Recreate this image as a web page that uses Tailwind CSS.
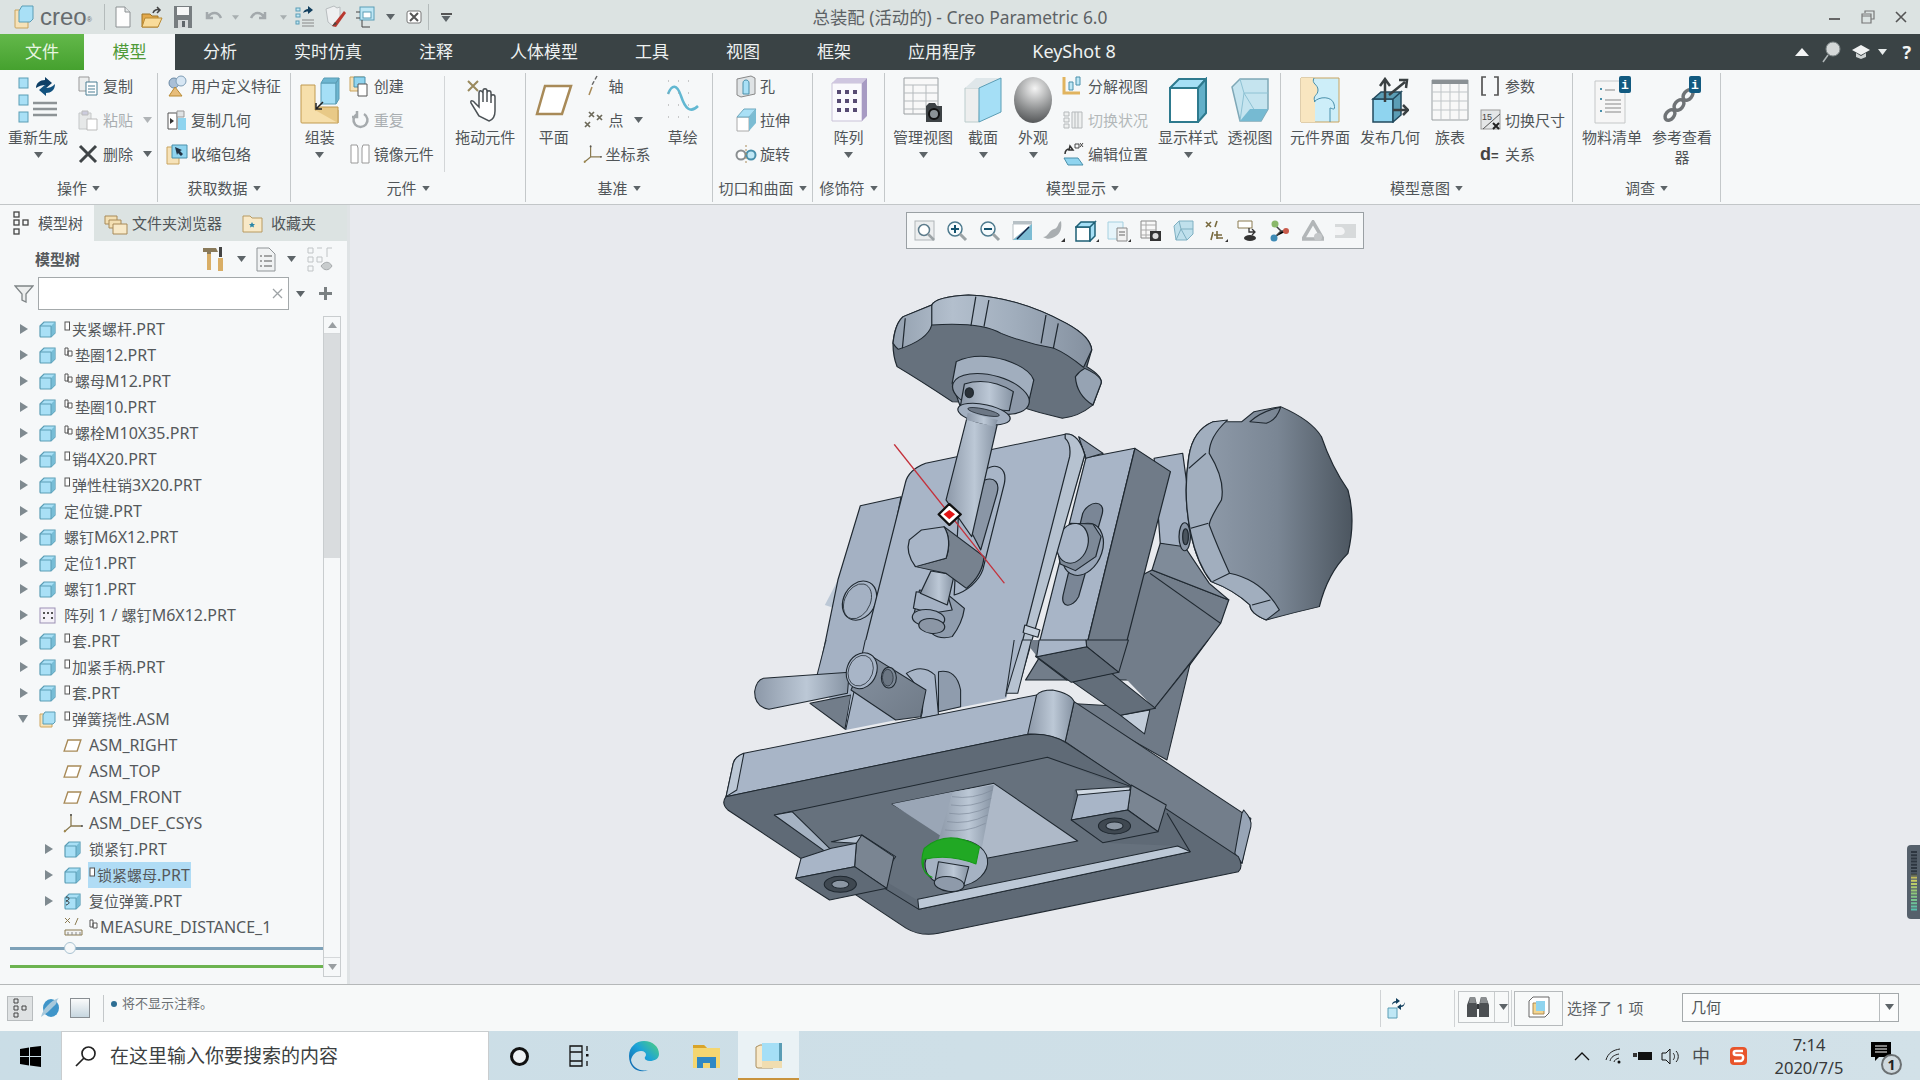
<!DOCTYPE html>
<html lang="zh-CN"><head><meta charset="utf-8"><title>Creo Parametric</title>
<script src="https://cdn.jsdelivr.net/npm/@tailwindcss/browser@4"></script></head>
<body class="w-[1920px] h-[1080px] overflow-hidden flex flex-col bg-[#e8eaee] text-[#505558] font-['Noto_Sans','Noto_Sans_CJK_SC',sans-serif]">
<svg class="hidden"><defs>
<symbol id="cube" viewBox="0 0 17 17"><path d="M1 5 5 1h11v11l-4 4H2a1 1 0 0 1-1-1z" fill="#a9e0f6" stroke="#5b9db5" stroke-width="1.2"/><path d="M12 16V5l4-4v11z" fill="#78bdd6"/><path d="M1 5h11V16" fill="none" stroke="#5b9db5"/></symbol>
<symbol id="asm" viewBox="0 0 17 17"><path d="M1 3h12v13H2a1 1 0 0 1-1-1z" fill="#f6e2b8" stroke="#cfa65e"/><path d="M4 4 6 1h10v10l-2 2H4z" fill="#a9e0f6" stroke="#5b9db5"/></symbol>
<symbol id="tri" viewBox="0 0 8 10"><path d="M0 0 8 5 0 10z" fill="#7f8a90"/></symbol>
<symbol id="dn" viewBox="0 0 9 6"><path d="M0 0h9L4.500 6z" fill="#5d6468"/></symbol>
<symbol id="mk1" viewBox="0 0 8 11"><rect x="1" y="1" width="4.500" height="8" fill="#fff" stroke="#555"/></symbol>
<symbol id="mk2" viewBox="0 0 11 11"><path d="M1 1h3v7H1z M4 4h4v5H4z" fill="#fff" stroke="#555"/></symbol>
<symbol id="plane" viewBox="0 0 20 14"><path d="M5 1h14l-4 12H1z" fill="#fff" stroke="#a88a58" stroke-width="1.500"/></symbol>
<symbol id="csys" viewBox="0 0 20 20"><path d="M8 1v12L1 19M8 13h11" fill="none" stroke="#8a7a50" stroke-width="1.300"/><circle cx="8" cy="2" r="1" fill="#555"/><circle cx="19" cy="13" r="1" fill="#555"/><circle cx="2" cy="18" r="1.200" fill="#a08a50"/></symbol>
</defs></svg>

<!-- title bar -->
<header class="h-[34px] shrink-0 bg-[#dce3e2] grid grid-cols-[1fr_auto_1fr] items-center">
 <div class="flex items-center h-full">
  <div class="flex items-center pl-[14px] w-[104px] h-full">
   <svg class="w-[20px] h-[24px]" viewBox="0 0 20 24"><path d="M1 5h13v18H2a1 1 0 0 1-1-1z" fill="#f6e2b8" stroke="#c9a45e"/><path d="M5 6 8 1h11v13l-3 3H5z" fill="#a9e0f6" stroke="#5b9db5"/></svg>
   <span class="ml-[6px] text-[24px] font-['Liberation_Sans',sans-serif] text-[#666b6e] leading-none whitespace-nowrap">creo<sup class="text-[7px]">®</sup></span>
  </div>
  <div class="w-px h-[26px] bg-[#b4bbbb] mr-[4px]"></div>
  <div class="flex items-center h-full">
   <div class="w-[28px] flex justify-center"><svg class="w-[18px] h-[22px]" viewBox="0 0 18 22"><path d="M2 1h9l5 5v15H2z" fill="#fdfdfd" stroke="#8b9092"/><path d="M11 1v5h5" fill="#e3e6e7" stroke="#8b9092"/></svg></div>
   <div class="w-[30px] flex justify-center"><svg class="w-[22px] h-[22px]" viewBox="0 0 22 22"><path d="M1 8h8l2 2h6v11H1z" fill="#e3a94b" stroke="#a07426"/><path d="M4 12h17l-4 9H1z" fill="#f9dc9b" stroke="#b98a33"/><path d="M12 7c1-3 4-4 6-3M16 1l3 3-3 3" fill="none" stroke="#444" stroke-width="1.500"/></svg></div>
   <div class="w-[32px] flex justify-center"><svg class="w-[20px] h-[24px]" viewBox="0 0 20 24"><path d="M1 1h18v22H1z" fill="#777d80"/><path d="M4 2h12v8H4z" fill="#f6f7f7"/><path d="M5 15h10v8H5z" fill="#d6d9da"/><path d="M9 16h3v6H9z" fill="#60666a"/></svg></div>
   <div class="w-[28px] flex justify-center"><svg class="w-[19px] h-[15px]" viewBox="0 0 19 15"><path d="M3 2v6h6M4 7c3-5 10-6 13 1" fill="none" stroke="#a3a9ac" stroke-width="2.500"/></svg></div>
   <div class="w-[16px] flex justify-center"><svg class="w-[7px] h-[5px]"><use href="#dn" opacity=".4"/></svg></div>
   <div class="w-[30px] flex justify-center"><svg class="w-[19px] h-[15px]" viewBox="0 0 19 15"><path d="M16 2v6h-6M15 7c-3-5-10-6-13 1" fill="none" stroke="#a3a9ac" stroke-width="2.500"/></svg></div>
   <div class="w-[20px] flex justify-center"><svg class="w-[7px] h-[5px]"><use href="#dn" opacity=".4"/></svg></div>
   <div class="w-[24px] flex justify-center"><svg class="w-[20px] h-[24px]" viewBox="0 0 20 24"><rect x="1" y="3" width="4" height="3" fill="#bfe7f5" stroke="#5b9db5"/><rect x="1" y="9" width="4" height="3" fill="#bfe7f5" stroke="#5b9db5"/><rect x="1" y="16" width="3" height="3" fill="#bfe7f5" stroke="#5b9db5"/><path d="M7 15h12M7 18h12M7 21h12" stroke="#888"/><path d="M8 8c1-3 3-4 5-4V1l5 4-5 4V6.500c-2 0-3 .5-5 1.500z" fill="#123f5e"/></svg></div>
   <div class="w-[38px] flex justify-center"><svg class="w-[24px] h-[24px]" viewBox="0 0 24 24"><path d="M2 4l8-3 3 2 3-1v11l-6 9-6-5z" fill="#eef0f1" stroke="#b8bdbf"/><path d="M8 21l12-15 2 2-10 14z" fill="#b8382f"/><path d="M8 21l3-4 2 2z" fill="#49433f"/></svg></div>
   <div class="w-[24px] flex justify-center"><svg class="w-[22px] h-[22px]" viewBox="0 0 22 22"><rect x="4" y="1" width="14" height="13" fill="#bfe7f5" stroke="#5b9db5"/><rect x="7" y="6" width="8" height="6" fill="#fff" stroke="#5b9db5"/><path d="M0 6h4M0 12h4M6 14v7h8" fill="none" stroke="#444"/></svg></div>
   <div class="w-[22px] flex justify-center"><svg class="w-[9px] h-[6px]"><use href="#dn"/></svg></div>
   <div class="w-[26px] flex justify-center"><svg class="w-[16px] h-[14px]" viewBox="0 0 16 14"><rect x="1" y="1" width="14" height="12" rx="2" fill="#fff" stroke="#777"/><path d="M4 3l8 8M12 3l-8 8" stroke="#555" stroke-width="2"/></svg></div>
   <div class="w-px h-[26px] bg-[#b4bbbb] mx-[1px]"></div>
   <div class="w-[32px] flex flex-col items-center gap-[1px]"><div class="w-[11px] h-[2px] bg-[#555]"></div><svg class="w-[10px] h-[6px]"><use href="#dn"/></svg></div>
  </div>
 </div>
 <div class="text-[17.4px] text-[#5d6265] whitespace-nowrap">总装配 (活动的) - Creo Parametric 6.0</div>
 <div class="flex items-center justify-end h-full pr-[3px]">
  <div class="w-[33px] flex justify-center"><div class="w-[11px] h-[2px] bg-[#666] mt-[4px]"></div></div>
  <div class="w-[33px] flex justify-center"><svg class="w-[14px] h-[14px]" viewBox="0 0 14 14"><path d="M4 3V1h9v8h-3M1 4h9v9H1zM1 4v2h9" fill="none" stroke="#777" stroke-width="1.200"/></svg></div>
  <div class="w-[33px] flex justify-center"><svg class="w-[14px] h-[14px]" viewBox="0 0 14 14"><path d="M2 2l10 10M12 2 2 12" stroke="#555" stroke-width="1.600"/></svg></div>
 </div>
</header>

<!-- menu bar -->
<nav class="h-[36px] shrink-0 bg-[#3a4345] flex items-stretch text-[17px] text-[#eef1f1]">
 <div class="w-[84px] flex items-center justify-center bg-gradient-to-b from-[#63b84a] to-[#45a12e] text-[#e8f5e1]">文件</div>
 <div class="w-[91px] flex items-center justify-center bg-[#f6f8f9] text-[#4f9a38]">模型</div>
 <div class="w-[90px] flex items-center justify-center">分析</div>
 <div class="w-[126px] flex items-center justify-center">实时仿真</div>
 <div class="w-[90px] flex items-center justify-center">注释</div>
 <div class="w-[126px] flex items-center justify-center">人体模型</div>
 <div class="w-[90px] flex items-center justify-center">工具</div>
 <div class="w-[92px] flex items-center justify-center">视图</div>
 <div class="w-[90px] flex items-center justify-center">框架</div>
 <div class="w-[126px] flex items-center justify-center">应用程序</div>
 <div class="w-[138px] flex items-center justify-center text-[18px] pb-[2px]">KeyShot 8</div>
 <div class="flex-1 flex items-center justify-end">
  <svg class="w-[16px] h-[10px] mr-[12px]" viewBox="0 0 16 10"><path d="M1 9 8 1l7 8z" fill="#f3f5f5"/></svg>
  <svg class="w-[20px] h-[24px] mr-[9px]" viewBox="0 0 20 24"><circle cx="11" cy="9" r="7" fill="#d4d8d8" stroke="#7d8687"/><path d="M6 15 1 22" stroke="#b0b7b8" stroke-width="1.500"/></svg>
  <svg class="w-[20px] h-[16px] mr-[7px]" viewBox="0 0 20 16"><path d="M10 1 19 6l-9 5-9-5z" fill="#f0f2f2"/><path d="M5 9v4l5 2 5-2V9l-5 3z" fill="#cfd4d4"/></svg>
  <svg class="w-[9px] h-[6px] mr-[15px]" viewBox="0 0 9 6"><path d="M0 0h9L4.500 6z" fill="#e8ecec"/></svg>
  <span class="text-[18px] font-bold text-[#f4f6f6] mr-[9px]">?</span>
 </div>
</nav>

<!-- ribbon -->
<section class="h-[135px] shrink-0 bg-[#f6f8f9] border-b border-[#c2c6c8] flex pt-[3px] pb-[2px] text-[15px] leading-[20px]">
 <!-- 操作 -->
 <div class="w-[158px] border-r border-[#c4c8ca] flex flex-col">
  <div class="h-[104px] flex">
   <div class="w-[76px] flex flex-col items-center">
    <div class="h-[54px] flex items-center"><svg class="w-[46px] h-[48px]" viewBox="0 0 46 48"><rect x="4" y="2" width="9" height="10" fill="#a9e0f6" stroke="#5b9db5"/><rect x="4" y="19" width="9" height="10" fill="#a9e0f6" stroke="#5b9db5"/><rect x="4" y="36" width="9" height="10" fill="#a9e0f6" stroke="#5b9db5"/><path d="M18 27h24M18 33h24M18 39h24" stroke="#8d9396" stroke-width="2.500"/><path d="M21 12c0-5 4-8 9-8V1l7 6-7 6v-4c-3 0-6 1-9 3z" fill="#0e3f66"/><path d="M40 8c0 6-4 9-9 9v3l-7-6 7-6v4c3 0 6-1 9-4z" fill="#12527f"/></svg></div>
    <div class="whitespace-nowrap">重新生成</div>
    <svg class="w-[9px] h-[6px] mt-[5px]"><use href="#dn"/></svg>
   </div>
   <div class="mt-[-4px] pl-[2px]">
    <div class="h-[34px] flex items-center"><svg class="w-[20px] h-[20px] mr-[5px]" viewBox="0 0 20 20"><path d="M1 1h10v14H1z" fill="#eceeee" stroke="#999"/><path d="M8 6h11v13H8z" fill="#fff" stroke="#4a7f94"/><path d="M10 10h7M10 13h7M10 16h7" stroke="#4a7f94"/></svg>复制</div>
    <div class="h-[34px] flex items-center text-[#a9aeb1]"><svg class="w-[20px] h-[22px] mr-[5px]" viewBox="0 0 20 22"><path d="M1 4h12v16H1z" fill="#e6e8e8" stroke="#c4c7c8"/><path d="M4 2h6v4H4z" fill="#ccd" stroke="#bbb"/><path d="M9 10h10v11H9z" fill="#fff" stroke="#bbb"/></svg>粘贴<svg class="w-[9px] h-[6px] ml-[10px]"><use href="#dn" opacity=".45"/></svg></div>
    <div class="h-[34px] flex items-center"><svg class="w-[20px] h-[20px] mr-[5px]" viewBox="0 0 20 20"><path d="M2 2l16 16M18 2 2 18" stroke="#3f4447" stroke-width="3"/></svg>删除<svg class="w-[9px] h-[6px] ml-[10px]"><use href="#dn"/></svg></div>
   </div>
  </div>
  <div class="flex-1 pb-[3px] flex items-center justify-center gap-[5px]">操作<svg class="w-[8px] h-[5px]"><use href="#dn"/></svg></div>
 </div>
 <!-- 获取数据 -->
 <div class="w-[133px] border-r border-[#c4c8ca] flex flex-col">
  <div class="h-[104px] mt-[-4px] pl-[8px] box-content pb-[4px]">
   <div class="h-[34px] flex items-center"><svg class="w-[22px] h-[22px] mr-[3px]" viewBox="0 0 22 22"><circle cx="8" cy="8" r="5" fill="#a9bfd6" stroke="#6c8aa5"/><circle cx="15" cy="6" r="5" fill="#d7e6f3" stroke="#7f9eb6"/><path d="M3 21l6-9 7 9z" fill="#e7bd7b" stroke="#b98a33"/></svg><span class="whitespace-nowrap">用户定义特征</span></div>
   <div class="h-[34px] flex items-center"><svg class="w-[22px] h-[22px] mr-[3px]" viewBox="0 0 22 22"><path d="M2 4h9v16H2z" fill="#fff" stroke="#555"/><path d="M4 9l4 3-4 3z" fill="#333"/><path d="M12 9h8v12h-8z" fill="#8fd4ef"/><path d="M11 2h7v6h-7z" fill="#dfe3e5" stroke="#999"/></svg>复制几何</div>
   <div class="h-[34px] flex items-center"><svg class="w-[22px] h-[22px] mr-[3px]" viewBox="0 0 22 22"><path d="M1 4h12v17H1z" fill="#f6e2b8" stroke="#c9a45e"/><path d="M6 2h15v13H6z" fill="#8fd4ef" stroke="#4a90ab"/><path d="M9 4l7 3-2 1 3 3-2 2-3-3-1 2z" fill="#234"/></svg>收缩包络</div>
  </div>
  <div class="flex-1 pb-[3px] flex items-center justify-center gap-[5px]">获取数据<svg class="w-[8px] h-[5px]"><use href="#dn"/></svg></div>
 </div>
 <!-- 元件 -->
 <div class="w-[235px] border-r border-[#c4c8ca] flex flex-col">
  <div class="h-[104px] flex">
   <div class="w-[58px] flex flex-col items-center">
    <div class="h-[54px] flex items-center"><svg class="w-[40px] h-[48px]" viewBox="0 0 40 48"><path d="M1 9h14v25h23v13H2a1 1 0 0 1-1-1z" fill="#f6dfab" stroke="#c09a50"/><path d="M15 34l4-3h19v16" fill="#e8c987" stroke="#c09a50"/><path d="M21 7h15v21H21z" fill="#a5dff6" stroke="#5b9db5"/><path d="M36 7l3-5v21l-3 5zM21 7l3-5h15l-3 5z" fill="#6db6d1" stroke="#5b9db5"/><path d="M16 33l7-7M16 27v6h6" fill="none" stroke="#222" stroke-width="1.500"/></svg></div>
    <div>组装</div>
    <svg class="w-[9px] h-[6px] mt-[5px]"><use href="#dn"/></svg>
   </div>
   <div class="w-[96px] mt-[-4px]">
    <div class="h-[34px] flex items-center"><svg class="w-[22px] h-[22px] mr-[3px]" viewBox="0 0 22 22"><path d="M1 2h14v14H1z" fill="#f6e2b8" stroke="#c9a45e"/><path d="M5 2h11v10H5z" fill="#8fd4ef" stroke="#4a90ab"/><path d="M9 9h9v12H9z" fill="#fff" stroke="#555"/></svg>创建</div>
    <div class="h-[34px] flex items-center text-[#a9aeb1]"><svg class="w-[22px] h-[20px] mr-[3px]" viewBox="0 0 22 20"><path d="M8 4a7 7 0 1 0 7 0M8 1v6H3" fill="none" stroke="#a5aaad" stroke-width="2.500"/></svg>重复</div>
    <div class="h-[34px] flex items-center"><svg class="w-[22px] h-[22px] mr-[3px]" viewBox="0 0 22 22"><path d="M2 2h6l1 3v15H2zM20 2h-6l-1 3v15h7z" fill="#fff" stroke="#999"/></svg><span class="whitespace-nowrap">镜像元件</span></div>
   </div>
   <div class="w-px h-[96px] bg-[#d3d6d8] mt-[3px]"></div>
   <div class="w-[80px] flex flex-col items-center">
    <div class="h-[54px] flex items-center"><svg class="w-[40px] h-[48px]" viewBox="0 0 40 48"><path d="M3 5l10 10M13 5 3 15" stroke="#9a8a5d" stroke-width="2"/><path d="M14 40 6 27c-1-3 2-3 4 0l4 4V17c0-3 3-3 4 0v9-11c0-3 4-3 4 0v11-9c0-3 4-3 4 0v10-6c0-3 4-3 4 0v14c0 6-3 9-6 10z" fill="#fff" stroke="#4c5256" stroke-width="1.500"/></svg></div>
    <div class="whitespace-nowrap">拖动元件</div>
   </div>
  </div>
  <div class="flex-1 pb-[3px] flex items-center justify-center gap-[5px]">元件<svg class="w-[8px] h-[5px]"><use href="#dn"/></svg></div>
 </div>
 <!-- 基准 -->
 <div class="w-[187px] border-r border-[#c4c8ca] flex flex-col">
  <div class="h-[104px] flex">
   <div class="w-[56px] flex flex-col items-center">
    <div class="h-[54px] flex items-center"><svg class="w-[38px] h-[32px]" viewBox="0 0 38 32"><path d="M10 2h26l-9 28H2z" fill="#fff" stroke="#a88a58" stroke-width="2.500"/></svg></div>
    <div>平面</div>
   </div>
   <div class="w-[69px] mt-[-4px] pl-[1px]">
    <div class="h-[34px] flex items-center"><svg class="w-[22px] h-[22px] mr-[4px]" viewBox="0 0 22 22"><path d="M14 1l-5 9" stroke="#666" stroke-width="1.500" stroke-dasharray="4 2"/><path d="M9 12l-3 8" stroke="#a88a58" stroke-width="1.500"/></svg>轴</div>
    <div class="h-[34px] flex items-center"><svg class="w-[22px] h-[22px] mr-[4px]" viewBox="0 0 22 22"><path d="M6 3l5 5M11 3 6 8M14 6l5 5M19 6l-5 5M2 13l5 5M7 13l-5 5" stroke="#6d6a5a" stroke-width="1.700"/></svg>点<svg class="w-[9px] h-[6px] ml-[10px]"><use href="#dn"/></svg></div>
    <div class="h-[34px] flex items-center"><svg class="w-[22px] h-[22px] mr-[4px]" viewBox="0 0 20 20"><use href="#csys"/></svg><span class="whitespace-nowrap">坐标系</span></div>
   </div>
   <div class="w-[62px] pl-[3px] flex flex-col items-center">
    <div class="h-[54px] flex items-center"><svg class="w-[36px] h-[44px]" viewBox="0 0 36 44"><path d="M3 16C7 6 12 6 16 18s9 18 17 10" fill="none" stroke="#62b8d2" stroke-width="2.500"/><path d="M3 3h30M3 15h30M3 27h30M3 39h30" stroke="#999" stroke-dasharray="1 9"/></svg></div>
    <div>草绘</div>
   </div>
  </div>
  <div class="flex-1 pb-[3px] flex items-center justify-center gap-[5px]">基准<svg class="w-[8px] h-[5px]"><use href="#dn"/></svg></div>
 </div>
 <!-- 切口和曲面 -->
 <div class="w-[100px] border-r border-[#c4c8ca] flex flex-col">
  <div class="h-[104px] mt-[-4px] pl-[22px] box-content pb-[4px]">
   <div class="h-[34px] flex items-center"><svg class="w-[22px] h-[24px] mr-[3px]" viewBox="0 0 22 24"><path d="M2 5l14-3 4 2v16l-14 3-4-2z" fill="#dfe3e5" stroke="#888"/><path d="M8 9c0-4 6-4 6 0v11H8z" fill="#a9e0f6" stroke="#4a90ab"/></svg>孔</div>
   <div class="h-[34px] flex items-center"><svg class="w-[22px] h-[24px] mr-[3px]" viewBox="0 0 22 24"><path d="M2 9h12v14H2z" fill="#fff" stroke="#aaa"/><path d="M2 9l7-8h12l-7 8z" fill="#a9e0f6" stroke="#6fa8bd"/><path d="M14 9l7-8v14l-7 8z" fill="#7bbcd3"/></svg>拉伸</div>
   <div class="h-[34px] flex items-center"><svg class="w-[22px] h-[20px] mr-[3px]" viewBox="0 0 22 20"><circle cx="6" cy="11" r="4.500" fill="#fff" stroke="#8a8f91" stroke-width="2"/><circle cx="16" cy="11" r="4.500" fill="#bfe7f5" stroke="#4a90ab" stroke-width="2"/><path d="M11 1v18" stroke="#a88a58" stroke-dasharray="2 2"/></svg>旋转</div>
  </div>
  <div class="flex-1 pb-[3px] flex items-center justify-center gap-[5px] whitespace-nowrap">切口和曲面<svg class="w-[8px] h-[5px]"><use href="#dn"/></svg></div>
 </div>
 <!-- 修饰符 -->
 <div class="w-[72px] border-r border-[#c4c8ca] flex flex-col">
  <div class="h-[104px] flex flex-col items-center">
   <div class="h-[54px] flex items-center"><svg class="w-[38px] h-[46px]" viewBox="0 0 38 46"><path d="M2 6h30v38H2z" fill="#faf9fd" stroke="#c9c2d8"/><path d="M2 6l5-5h30l-5 5z" fill="#cfc6e0"/><path d="M32 6l5-5v38l-5 5z" fill="#a79bc3"/><path d="M7 13h4v4H7zM15 13h4v4h-4zM23 13h4v4h-4zM7 22h4v4H7zM15 22h4v4h-4zM23 22h4v4h-4zM7 31h4v4H7zM15 31h4v4h-4zM23 31h4v4h-4z" fill="#574a73"/></svg></div>
   <div>阵列</div>
   <svg class="w-[9px] h-[6px] mt-[5px]"><use href="#dn"/></svg>
  </div>
  <div class="flex-1 pb-[3px] flex items-center justify-center gap-[5px]">修饰符<svg class="w-[8px] h-[5px]"><use href="#dn"/></svg></div>
 </div>
 <!-- 模型显示 -->
 <div class="w-[396px] border-r border-[#c4c8ca] flex flex-col">
  <div class="h-[104px] flex">
   <div class="w-[76px] flex flex-col items-center">
    <div class="h-[54px] flex items-center"><svg class="w-[40px] h-[48px]" viewBox="0 0 40 48"><path d="M1 2h34v36H1z" fill="#f8f8f8" stroke="#9a9fa2"/><path d="M1 9h34M1 17h34M1 25h34M1 33h34M10 9v29M23 9v29" stroke="#b5babd"/><path d="M23 30l3-3h6l2 3h5v16H23z" fill="#3d4245"/><circle cx="31" cy="38" r="5" fill="#8b9296" stroke="#111" stroke-width="2"/></svg></div>
    <div class="whitespace-nowrap">管理视图</div>
    <svg class="w-[9px] h-[6px] mt-[5px]"><use href="#dn"/></svg>
   </div>
   <div class="w-[44px] flex flex-col items-center">
    <div class="h-[54px] flex items-center"><svg class="w-[38px] h-[46px]" viewBox="0 0 38 46"><path d="M1 11h15l-1 34H1z" fill="#edeeee" stroke="#bcc"/><path d="M1 11 12 1h25L16 11z" fill="#dfe7ea"/><path d="M15 11 37 1v34L15 45z" fill="#a5dff6" stroke="#5b9db5"/></svg></div>
    <div>截面</div>
    <svg class="w-[9px] h-[6px] mt-[5px]"><use href="#dn"/></svg>
   </div>
   <div class="w-[56px] flex flex-col items-center">
    <div class="h-[54px] flex items-center"><div class="w-[38px] h-[46px] rounded-[50%] bg-[radial-gradient(circle_at_55%_25%,#f4f4f4,#8a8c8d_55%,#3c3e40)]"></div></div>
    <div>外观</div>
    <svg class="w-[9px] h-[6px] mt-[5px]"><use href="#dn"/></svg>
   </div>
   <div class="w-[89px] mt-[-4px] pl-[1px]">
    <div class="h-[34px] flex items-center"><svg class="w-[22px] h-[22px] mr-[4px]" viewBox="0 0 22 22"><path d="M2 2v16h16" fill="none" stroke="#e1b45f" stroke-width="3"/><path d="M7 7h4v8H7zM14 2h4v8h-4z" fill="#bfe7f5" stroke="#4a90ab"/></svg><span class="whitespace-nowrap">分解视图</span></div>
    <div class="h-[34px] flex items-center text-[#b3b8ba]"><svg class="w-[22px] h-[20px] mr-[4px]" viewBox="0 0 22 20"><path d="M2 2h5v4H2zM2 8h5v4H2zM2 14h5v4H2zM10 2h10v16H10z" fill="#eef0f0" stroke="#b5b9bb"/><path d="M13 2v16M16 2v16" stroke="#b5b9bb"/></svg><span class="whitespace-nowrap">切换状况</span></div>
    <div class="h-[34px] flex items-center"><svg class="w-[22px] h-[24px] mr-[4px]" viewBox="0 0 22 24"><path d="M2 16h14l5 7H6z" fill="#8fd4ef" stroke="#4a90ab"/><path d="M3 12c0-4 2-5 5-5M8 4l-1 4 4 0z" fill="none" stroke="#333" stroke-width="1.500"/><path d="M13 2h4v4h-4zM18 1l3 4M21 1l-3 4" stroke="#444" fill="none"/></svg><span class="whitespace-nowrap">编辑位置</span></div>
   </div>
   <div class="w-[76px] flex flex-col items-center">
    <div class="h-[54px] flex items-center"><svg class="w-[38px] h-[46px]" viewBox="0 0 38 46"><path d="M1 11h28v34H1z" fill="#fff" stroke="#2e7a8e" stroke-width="2"/><path d="M1 11 10 2h27l-8 9z" fill="#a5dff6" stroke="#2e7a8e" stroke-width="2"/><path d="M29 11l8-9v34l-8 9z" fill="#62b0c9" stroke="#2e7a8e" stroke-width="2"/></svg></div>
    <div class="whitespace-nowrap">显示样式</div>
    <svg class="w-[9px] h-[6px] mt-[5px]"><use href="#dn"/></svg>
   </div>
   <div class="w-[48px] flex flex-col items-center">
    <div class="h-[54px] flex items-center"><svg class="w-[38px] h-[46px]" viewBox="0 0 38 46"><path d="M1 10 9 2h28v30l-7 12H9z" fill="#c5e4ef" stroke="#7fa8b7" stroke-width="1.500"/><path d="M9 2l4 14h24M13 16 9 44M13 16l17 28" fill="none" stroke="#8ec2d4"/><path d="M9 44l10-12h18l-7 12z" fill="#76bad2"/></svg></div>
    <div class="whitespace-nowrap">透视图</div>
   </div>
  </div>
  <div class="flex-1 pb-[3px] flex items-center justify-center gap-[5px]">模型显示<svg class="w-[8px] h-[5px]"><use href="#dn"/></svg></div>
 </div>
 <!-- 模型意图 -->
 <div class="w-[292px] border-r border-[#c4c8ca] flex flex-col">
  <div class="h-[104px] flex">
   <div class="w-[78px] flex flex-col items-center">
    <div class="h-[54px] flex items-center"><svg class="w-[40px] h-[46px]" viewBox="0 0 40 46"><path d="M1 1h38v44H1z" fill="#cdeef9" stroke="#c9a45e"/><path d="M1 1h13c-3 6 4 6 4 12s-6 5-3 12v20H1z" fill="#f8e6c0"/><path d="M14 25c5-6 18-6 20 2s-2 4-4 4v14" fill="none" stroke="#4a90ab"/><path d="M14 1c-3 6 4 6 4 12s-6 5-3 12" fill="none" stroke="#4a90ab"/></svg></div>
    <div class="whitespace-nowrap">元件界面</div>
   </div>
   <div class="w-[62px] flex flex-col items-center">
    <div class="h-[54px] flex items-center"><svg class="w-[38px] h-[46px]" viewBox="0 0 38 46"><path d="M2 22h20v23H2z" fill="#8fd4ef" stroke="#234a5e" stroke-width="1.500"/><path d="M2 22l8-7h20l-8 7zM22 22l8-7v23l-8 7z" fill="#5b9db5" stroke="#234a5e" stroke-width="1.500"/><path d="M14 25V4M9 9l5-7 5 7M18 18 34 5M28 3l8 0-1 8M22 33h15M32 28l5 5-5 5" fill="none" stroke="#3a4042" stroke-width="2.500"/></svg></div>
    <div class="whitespace-nowrap">发布几何</div>
   </div>
   <div class="w-[58px] flex flex-col items-center">
    <div class="h-[54px] flex items-center"><svg class="w-[38px] h-[42px]" viewBox="0 0 38 42"><path d="M1 1h36v40H1z" fill="#f8f8f8" stroke="#9a9fa2"/><path d="M1 1h36v4H1z" fill="#8a9094"/><path d="M1 13h36M1 22h36M1 31h36M10 5v36M19 5v36M28 5v36" stroke="#c0c5c8"/></svg></div>
    <div>族表</div>
   </div>
   <div class="mt-[-4px] pl-[1px]">
    <div class="h-[34px] flex items-center"><svg class="w-[22px] h-[22px] mr-[3px]" viewBox="0 0 22 22"><path d="M6 2H2v18h4M14 2h4v18h-4" fill="none" stroke="#555" stroke-width="1.700"/></svg>参数</div>
    <div class="h-[34px] flex items-center"><svg class="w-[22px] h-[24px] mr-[3px]" viewBox="0 0 22 24"><rect x="1" y="2" width="19" height="19" fill="#e4e6e7" stroke="#999"/><text x="2" y="12" font-size="9" fill="#444" font-family="Liberation Sans">15</text><path d="M3 21 20 6" stroke="#555"/><path d="M13 15l6 6M19 15l-6 6" stroke="#222" stroke-width="2"/></svg><span class="whitespace-nowrap">切换尺寸</span></div>
    <div class="h-[34px] flex items-center"><span class="w-[22px] mr-[3px] text-[18px] font-bold text-[#444] font-['Liberation_Sans',sans-serif] leading-none whitespace-nowrap">d<span class="text-[13px]">=</span></span>关系</div>
   </div>
  </div>
  <div class="flex-1 pb-[3px] flex items-center justify-center gap-[5px]">模型意图<svg class="w-[8px] h-[5px]"><use href="#dn"/></svg></div>
 </div>
 <!-- 调查 -->
 <div class="w-[148px] border-r border-[#c4c8ca] flex flex-col">
  <div class="h-[104px] flex">
   <div class="w-[78px] flex flex-col items-center">
    <div class="h-[54px] flex items-center"><svg class="w-[40px] h-[50px]" viewBox="0 0 40 50"><path d="M3 6h24l6 6v36H3z" fill="#f6f6f6" stroke="#c4c7c8"/><path d="M8 14h2M8 24h2M8 36h2" stroke="#4a90ab" stroke-width="2"/><path d="M13 15h10M13 25h16M13 29h16M13 33h16M13 37h16" stroke="#888"/><rect x="27" y="1" width="12" height="17" rx="2" fill="#125a80"/><text x="33" y="14" font-size="13" font-weight="bold" text-anchor="middle" fill="#fff" font-family="Liberation Mono">i</text></svg></div>
    <div class="whitespace-nowrap">物料清单</div>
   </div>
   <div class="w-[62px] flex flex-col items-center">
    <div class="h-[54px] flex items-center"><svg class="w-[40px] h-[50px]" viewBox="0 0 40 50"><g fill="none" stroke="#6f7376" stroke-width="3.500"><ellipse cx="8" cy="40" rx="6" ry="4" transform="rotate(-50 8 40)"/><ellipse cx="17" cy="30" rx="6" ry="4" transform="rotate(-50 17 30)"/><ellipse cx="26" cy="20" rx="6" ry="4" transform="rotate(-50 26 20)"/></g><rect x="27" y="1" width="12" height="17" rx="2" fill="#125a80"/><text x="33" y="14" font-size="13" font-weight="bold" text-anchor="middle" fill="#fff" font-family="Liberation Mono">i</text></svg></div>
    <div class="text-center">参考查看器</div>
   </div>
  </div>
  <div class="flex-1 pb-[3px] flex items-center justify-center gap-[5px]">调查<svg class="w-[8px] h-[5px]"><use href="#dn"/></svg></div>
 </div>
 <div class="flex-1"></div>
</section>

<!-- body -->
<main class="h-[779px] shrink-0 flex">
 <aside class="w-[350px] border-r-[3px] border-[#dfe3e5] flex flex-col bg-[#f6f8f9]">
  <div class="h-[36px] flex bg-[#dce3e2] text-[15px] items-stretch shrink-0">
   <div class="w-[94px] bg-[#f6f8f9] flex items-center pl-[13px] gap-[9px]"><svg class="w-[16px] h-[24px]" viewBox="0 0 16 24"><rect x="1" y="1" width="5" height="5" fill="none" stroke="#444" stroke-width="1.300"/><rect x="1" y="9" width="5" height="5" fill="none" stroke="#444" stroke-width="1.300"/><rect x="10" y="9" width="5" height="5" fill="none" stroke="#444" stroke-width="1.300"/><rect x="1" y="18" width="5" height="5" fill="none" stroke="#444" stroke-width="1.300"/></svg>模型树</div>
   <div class="w-[146px] flex items-center pl-[10px] gap-[4px]"><svg class="w-[24px] h-[24px]" viewBox="0 0 24 24"><path d="M1 5h12v8H1z" fill="#f3dfb3" stroke="#a88a58"/><path d="M5 9h12v8H5z" fill="#f3dfb3" stroke="#a88a58"/><path d="M9 13h14v10H9z" fill="#f8e9c8" stroke="#a88a58"/></svg><span class="whitespace-nowrap">文件夹浏览器</span></div>
   <div class="flex items-center pl-[2px] gap-[8px]"><svg class="w-[21px] h-[20px]" viewBox="0 0 21 20"><path d="M1 3h7l2 2h10v14H1z" fill="#f8e9c8" stroke="#b89a60"/><path d="M10 9l1 2 2 0-1.500 1.500.5 2-2-1-2 1 .5-2L7 11h2z" fill="#2b86a8"/></svg>收藏夹</div>
  </div>
  <div class="h-[36px] flex items-center shrink-0">
   <div class="w-[202px] pl-[35px] text-[15px] font-bold text-[#55595c]">模型树</div>
   <svg class="w-[22px] h-[26px]" viewBox="0 0 22 26"><path d="M1 2h13l2 4H9v18H5V6H1z" fill="#8a7a5a"/><path d="M5 8h4v16H5z" fill="#d9ae66"/><path d="M17 1h3v10h-3z" fill="#444"/><path d="M16 12h5v13h-5z" fill="#d9ae66"/></svg>
   <svg class="w-[9px] h-[6px] ml-[13px]"><use href="#dn"/></svg>
   <svg class="w-[20px] h-[25px] ml-[10px]" viewBox="0 0 20 25"><path d="M1 1h12l6 6v17H1z" fill="#f0f2f3" stroke="#8f9497"/><path d="M4 9h2M4 14h2M4 19h2M8 9h8M8 14h8M8 19h8" stroke="#555"/></svg>
   <svg class="w-[9px] h-[6px] ml-[11px]"><use href="#dn"/></svg>
   <svg class="w-[26px] h-[25px] ml-[11px]" viewBox="0 0 26 25"><path d="M1 1h5v5H1zM1 10h5v5H1zM1 19h5v5H1zM10 10h5v5h-5zM10 1h5M20 1h5M20 1v9" fill="none" stroke="#c0c4c6"/><path d="M14 19c4-5 8-5 11 0-3 5-8 5-11 0z" fill="#c8cccd" stroke="#a6aaac"/></svg>
  </div>
  <div class="h-[33px] flex items-center shrink-0">
   <svg class="w-[20px] h-[18px] ml-[14px] mr-[4px]" viewBox="0 0 20 18"><path d="M1 1h18l-7 8v8l-4-2V9z" fill="#eceeee" stroke="#7f8587" stroke-width="1.300"/></svg>
   <div class="w-[251px] h-[33px] bg-white border border-[#a4a9ab] flex items-center justify-end pr-[5px]"><svg class="w-[11px] h-[11px]" viewBox="0 0 11 11"><path d="M1 1l9 9M10 1l-9 9" stroke="#9ea3a6" stroke-width="1.300"/></svg></div>
   <svg class="w-[9px] h-[6px] ml-[7px]"><use href="#dn"/></svg>
   <svg class="w-[13px] h-[13px] ml-[14px]" viewBox="0 0 13 13"><path d="M5 0h3v5h5v3H8v5H5V8H0V5h5z" fill="#7a8082"/></svg>
  </div>
  <div class="mt-[6px] flex h-[661px] text-[15px] text-[#55595c] leading-none">
   <div class="w-[323px] shrink-0 flex flex-col">
    <div class="h-[26px] flex items-center whitespace-nowrap"><svg class="w-[8px] h-[10px] ml-[20px] mr-[11px]"><use href="#tri"/></svg><svg class="w-[17px] h-[17px] mr-[8px]"><use href="#cube"/></svg><svg class="w-[8px] h-[11px] mb-[6px]"><use href="#mk1"/></svg>夹紧螺杆<span class="text-[16px]">.PRT</span></div>
    <div class="h-[26px] flex items-center whitespace-nowrap"><svg class="w-[8px] h-[10px] ml-[20px] mr-[11px]"><use href="#tri"/></svg><svg class="w-[17px] h-[17px] mr-[8px]"><use href="#cube"/></svg><svg class="w-[11px] h-[11px] mb-[6px]"><use href="#mk2"/></svg>垫圈<span class="text-[16px]">12.PRT</span></div>
    <div class="h-[26px] flex items-center whitespace-nowrap"><svg class="w-[8px] h-[10px] ml-[20px] mr-[11px]"><use href="#tri"/></svg><svg class="w-[17px] h-[17px] mr-[8px]"><use href="#cube"/></svg><svg class="w-[11px] h-[11px] mb-[6px]"><use href="#mk2"/></svg>螺母<span class="text-[16px]">M12.PRT</span></div>
    <div class="h-[26px] flex items-center whitespace-nowrap"><svg class="w-[8px] h-[10px] ml-[20px] mr-[11px]"><use href="#tri"/></svg><svg class="w-[17px] h-[17px] mr-[8px]"><use href="#cube"/></svg><svg class="w-[11px] h-[11px] mb-[6px]"><use href="#mk2"/></svg>垫圈<span class="text-[16px]">10.PRT</span></div>
    <div class="h-[26px] flex items-center whitespace-nowrap"><svg class="w-[8px] h-[10px] ml-[20px] mr-[11px]"><use href="#tri"/></svg><svg class="w-[17px] h-[17px] mr-[8px]"><use href="#cube"/></svg><svg class="w-[11px] h-[11px] mb-[6px]"><use href="#mk2"/></svg>螺栓<span class="text-[16px]">M10X35.PRT</span></div>
    <div class="h-[26px] flex items-center whitespace-nowrap"><svg class="w-[8px] h-[10px] ml-[20px] mr-[11px]"><use href="#tri"/></svg><svg class="w-[17px] h-[17px] mr-[8px]"><use href="#cube"/></svg><svg class="w-[8px] h-[11px] mb-[6px]"><use href="#mk1"/></svg>销<span class="text-[16px]">4X20.PRT</span></div>
    <div class="h-[26px] flex items-center whitespace-nowrap"><svg class="w-[8px] h-[10px] ml-[20px] mr-[11px]"><use href="#tri"/></svg><svg class="w-[17px] h-[17px] mr-[8px]"><use href="#cube"/></svg><svg class="w-[8px] h-[11px] mb-[6px]"><use href="#mk1"/></svg>弹性柱销<span class="text-[16px]">3X20.PRT</span></div>
    <div class="h-[26px] flex items-center whitespace-nowrap"><svg class="w-[8px] h-[10px] ml-[20px] mr-[11px]"><use href="#tri"/></svg><svg class="w-[17px] h-[17px] mr-[8px]"><use href="#cube"/></svg>定位键<span class="text-[16px]">.PRT</span></div>
    <div class="h-[26px] flex items-center whitespace-nowrap"><svg class="w-[8px] h-[10px] ml-[20px] mr-[11px]"><use href="#tri"/></svg><svg class="w-[17px] h-[17px] mr-[8px]"><use href="#cube"/></svg>螺钉<span class="text-[16px]">M6X12.PRT</span></div>
    <div class="h-[26px] flex items-center whitespace-nowrap"><svg class="w-[8px] h-[10px] ml-[20px] mr-[11px]"><use href="#tri"/></svg><svg class="w-[17px] h-[17px] mr-[8px]"><use href="#cube"/></svg>定位<span class="text-[16px]">1.PRT</span></div>
    <div class="h-[26px] flex items-center whitespace-nowrap"><svg class="w-[8px] h-[10px] ml-[20px] mr-[11px]"><use href="#tri"/></svg><svg class="w-[17px] h-[17px] mr-[8px]"><use href="#cube"/></svg>螺钉<span class="text-[16px]">1.PRT</span></div>
    <div class="h-[26px] flex items-center whitespace-nowrap"><svg class="w-[8px] h-[10px] ml-[20px] mr-[11px]"><use href="#tri"/></svg><svg class="w-[17px] h-[17px] mr-[8px]" viewBox="0 0 17 17"><rect x="1" y="1" width="15" height="15" fill="#f4f1f8" stroke="#9b90b5"/><path d="M4 5h2v2H4zM8 5h2v2H8zM12 5h2v2h-2zM4 10h2v2H4zM12 10h2v2h-2z" fill="#555"/></svg>阵列<span class="text-[16px] whitespace-pre"> 1 / </span>螺钉<span class="text-[16px]">M6X12.PRT</span></div>
    <div class="h-[26px] flex items-center whitespace-nowrap"><svg class="w-[8px] h-[10px] ml-[20px] mr-[11px]"><use href="#tri"/></svg><svg class="w-[17px] h-[17px] mr-[8px]"><use href="#cube"/></svg><svg class="w-[8px] h-[11px] mb-[6px]"><use href="#mk1"/></svg>套<span class="text-[16px]">.PRT</span></div>
    <div class="h-[26px] flex items-center whitespace-nowrap"><svg class="w-[8px] h-[10px] ml-[20px] mr-[11px]"><use href="#tri"/></svg><svg class="w-[17px] h-[17px] mr-[8px]"><use href="#cube"/></svg><svg class="w-[8px] h-[11px] mb-[6px]"><use href="#mk1"/></svg>加紧手柄<span class="text-[16px]">.PRT</span></div>
    <div class="h-[26px] flex items-center whitespace-nowrap"><svg class="w-[8px] h-[10px] ml-[20px] mr-[11px]"><use href="#tri"/></svg><svg class="w-[17px] h-[17px] mr-[8px]"><use href="#cube"/></svg><svg class="w-[8px] h-[11px] mb-[6px]"><use href="#mk1"/></svg>套<span class="text-[16px]">.PRT</span></div>
    <div class="h-[26px] flex items-center whitespace-nowrap"><svg class="w-[10px] h-[8px] ml-[18px] mr-[11px]" viewBox="0 0 10 8"><path d="M0 0h10L5 8z" fill="#7f8a90"/></svg><svg class="w-[17px] h-[17px] mr-[8px]"><use href="#asm"/></svg><svg class="w-[8px] h-[11px] mb-[6px]"><use href="#mk1"/></svg>弹簧挠性<span class="text-[16px]">.ASM</span></div>
    <div class="h-[26px] flex items-center whitespace-nowrap pl-[63px] text-[16px]"><svg class="w-[19px] h-[13px] mr-[7px]"><use href="#plane"/></svg>ASM_RIGHT</div>
    <div class="h-[26px] flex items-center whitespace-nowrap pl-[63px] text-[16px]"><svg class="w-[19px] h-[13px] mr-[7px]"><use href="#plane"/></svg>ASM_TOP</div>
    <div class="h-[26px] flex items-center whitespace-nowrap pl-[63px] text-[16px]"><svg class="w-[19px] h-[13px] mr-[7px]"><use href="#plane"/></svg>ASM_FRONT</div>
    <div class="h-[26px] flex items-center whitespace-nowrap pl-[63px] text-[16px]"><svg class="w-[20px] h-[20px] mr-[6px]"><use href="#csys"/></svg>ASM_DEF_CSYS</div>
    <div class="h-[26px] flex items-center whitespace-nowrap"><svg class="w-[8px] h-[10px] ml-[45px] mr-[11px]"><use href="#tri"/></svg><svg class="w-[17px] h-[17px] mr-[8px]"><use href="#cube"/></svg>锁紧钉<span class="text-[16px]">.PRT</span></div>
    <div class="h-[26px] flex items-center whitespace-nowrap"><svg class="w-[8px] h-[10px] ml-[45px] mr-[11px]"><use href="#tri"/></svg><svg class="w-[17px] h-[17px] mr-[7px]"><use href="#cube"/></svg><div class="h-[26px] w-[103px] bg-[#b0dcf5] flex items-center pl-[1px]"><svg class="w-[8px] h-[11px] mb-[6px]"><use href="#mk1"/></svg>锁紧螺母<span class="text-[16px]">.PRT</span></div></div>
    <div class="h-[26px] flex items-center whitespace-nowrap"><svg class="w-[8px] h-[10px] ml-[45px] mr-[11px]"><use href="#tri"/></svg><svg class="w-[17px] h-[17px] mr-[8px]" viewBox="0 0 17 17"><use href="#cube"/><path d="M2 4c4 0 4 3 0 4 4 0 4 3 0 4" fill="none" stroke="#333"/></svg>复位弹簧<span class="text-[16px]">.PRT</span></div>
    <div class="h-[26px] flex items-center whitespace-nowrap pl-[64px] text-[16px]"><svg class="w-[19px] h-[20px] mr-[6px]" viewBox="0 0 19 20"><path d="M1 1l5 5M6 1 1 6M14 1l-3 7M1 13h17v5H1z" fill="#f2f3f3" stroke="#8a7a50"/><path d="M4 15v3M8 15v3M12 15v3M16 15v3" stroke="#888"/></svg><svg class="w-[11px] h-[11px] mb-[6px]"><use href="#mk2"/></svg>MEASURE_DISTANCE_1</div>
    <div class="relative mt-[7px] ml-[10px] h-[3px] bg-[#7da1b8]"><div class="absolute left-[54px] top-[-5px] w-[12px] h-[12px] rounded-full bg-[#f6f8f9] border border-[#a9c3d2]"></div></div>
    <div class="mt-[15px] ml-[10px] h-[3px] bg-[#6cb350]"></div>
   </div>
   <div class="w-[18px] shrink-0 border border-[#c9cdcf] flex flex-col">
    <div class="h-[17px] flex items-center justify-center border-b border-[#d5d8da]"><svg class="w-[9px] h-[6px] rotate-180"><use href="#dn" opacity=".6"/></svg></div>
    <div class="h-[224px] bg-[#d9dcde]"></div>
    <div class="flex-1"></div>
    <div class="h-[19px] flex items-center justify-center border-t border-[#d5d8da]"><svg class="w-[9px] h-[6px]"><use href="#dn" opacity=".6"/></svg></div>
   </div>
  </div>
 </aside>
 <div class="flex-1 relative bg-[#e8eaee]">
  <!-- viewport toolbar -->
  <div class="absolute left-[556px] top-[7px] w-[458px] h-[37px] bg-[#f5f7f8] border border-[#9aa0a4] flex items-center pl-[2px]">
   <div class="w-[32.3px] flex justify-center"><svg class="w-[22px] h-[22px]" viewBox="0 0 22 22"><rect x="1" y="1" width="19" height="19" fill="#eceeef" stroke="#b0b5b8"/><circle cx="10" cy="10" r="5.500" fill="#fff" stroke="#5d7c8c" stroke-width="1.500"/><path d="M14 14l6 6" stroke="#9ca3a6" stroke-width="2.500"/></svg></div>
   <div class="w-[32.3px] flex justify-center"><svg class="w-[22px] h-[22px]" viewBox="0 0 22 22"><circle cx="9" cy="9" r="7" fill="#f6fbfd" stroke="#4d7a8e" stroke-width="1.500"/><path d="M5 9h8M9 5v8" stroke="#15536f" stroke-width="2"/><path d="M14 14l6 6" stroke="#9ca3a6" stroke-width="3"/></svg></div>
   <div class="w-[32.3px] flex justify-center"><svg class="w-[22px] h-[22px]" viewBox="0 0 22 22"><circle cx="9" cy="9" r="7" fill="#f6fbfd" stroke="#4d7a8e" stroke-width="1.500"/><path d="M5 9h8" stroke="#15536f" stroke-width="2"/><path d="M14 14l6 6" stroke="#9ca3a6" stroke-width="3"/></svg></div>
   <div class="w-[32.3px] flex justify-center"><svg class="w-[21px] h-[21px]" viewBox="0 0 21 21"><path d="M1 1h19v3H1z" fill="#b7c0c5"/><path d="M1 4h19L1 20z" fill="#fff" stroke="#b7c0c5"/><path d="M20 4v16H1z" fill="#7cbcd3"/><path d="M5 19 17 7" stroke="#124" stroke-width="1.500"/></svg></div>
   <div class="w-[32.3px] flex justify-center"><svg class="w-[24px] h-[22px]" viewBox="0 0 24 22"><path d="M1 17c5 0 6-7 11-8s3-6 7-8c1 6 0 12-5 15s-8 4-13 1z" fill="#a9aeb1"/><path d="M23 22h-4l4-4z" fill="#333"/></svg></div>
   <div class="w-[32.3px] flex justify-center"><svg class="w-[24px] h-[22px]" viewBox="0 0 24 22"><path d="M1 7h14v14H1z" fill="#fff" stroke="#1e6076" stroke-width="1.500"/><path d="M1 7l5-5h14l-5 5zM15 7l5-5v14l-5 5z" fill="#a5dff6" stroke="#1e6076" stroke-width="1.500"/><path d="M24 22h-3l3-3z" fill="#333"/></svg></div>
   <div class="w-[32.3px] flex justify-center"><svg class="w-[24px] h-[22px]" viewBox="0 0 24 22"><path d="M1 2h15v17H1z" fill="#e6f4fa" stroke="#a5d0e0"/><path d="M10 8h10v13H10z" fill="#f2f2f2" stroke="#888"/><path d="M12 12h6M12 15h6" stroke="#666"/><path d="M24 22h-3l3-3z" fill="#333"/></svg></div>
   <div class="w-[32.3px] flex justify-center"><svg class="w-[22px] h-[22px]" viewBox="0 0 22 22"><path d="M1 1h15v17H1z" fill="#f8f8f8" stroke="#888"/><path d="M1 5h15M1 10h15M1 15h15M6 1v17" stroke="#aaa"/><path d="M10 11h11v10H10z" fill="#333"/><circle cx="15.500" cy="16" r="3" fill="#ddd"/></svg></div>
   <div class="w-[32.3px] flex justify-center"><svg class="w-[21px] h-[21px]" viewBox="0 0 21 21"><path d="M1 6l5-5h14v13l-6 6H3z" fill="#bfe0ec" stroke="#7fb0c2"/><path d="M6 1l2 8h12M8 9l-5 11M8 9l6 11" fill="none" stroke="#7fb0c2"/></svg></div>
   <div class="w-[32.3px] flex justify-center"><svg class="w-[24px] h-[22px]" viewBox="0 0 24 22"><path d="M2 2l5 5M7 2 2 7M13 1l-2 6M9 12l-2 8M13 11v8M10 15h8M19 18h-6" stroke="#786a3f" stroke-width="1.600"/><path d="M24 22h-3l3-3z" fill="#333"/></svg></div>
   <div class="w-[32.3px] flex justify-center"><svg class="w-[22px] h-[22px]" viewBox="0 0 22 22"><path d="M1 1h14v7H1z" fill="#fff" stroke="#8a7a50"/><path d="M12 8v4h6M15 9l3 3-3 3" fill="none" stroke="#333" stroke-width="1.300"/><ellipse cx="13" cy="18" rx="6" ry="3" fill="#333"/></svg></div>
   <div class="w-[32.3px] flex justify-center"><svg class="w-[20px] h-[22px]" viewBox="0 0 20 22"><path d="M5 5l6 6M5 17l6-6h6" stroke="#444" stroke-width="1.500"/><circle cx="5" cy="4" r="3.500" fill="#8ab86a"/><circle cx="4" cy="18" r="3.500" fill="#3d8ab5"/><circle cx="16" cy="11" r="3" fill="#c85a4a"/></svg></div>
   <div class="w-[32.3px] flex justify-center"><svg class="w-[22px] h-[21px]" viewBox="0 0 22 21"><path d="M11 2 21 19H1z" fill="none" stroke="#b2b6b8" stroke-width="3.500"/><circle cx="16" cy="17" r="4" fill="#c4c7c9"/></svg></div>
   <div class="w-[32.3px] flex justify-center"><svg class="w-[22px] h-[16px]" viewBox="0 0 22 16"><path d="M1 1h21v14H1z" fill="#d7dadb"/><path d="M1 4h6c4 1 6 7 0 8H1z" fill="#f3f4f5"/></svg></div>
  </div>
  <!-- model -->
  <svg class="absolute left-[350px] top-[65px] w-[680px] h-[680px]" viewBox="700 270 680 680">
   <defs>
    <linearGradient id="kf" x1="0" x2="1"><stop offset="0" stop-color="#939fae"/><stop offset=".55" stop-color="#7a8694"/><stop offset="1" stop-color="#4c5660"/></linearGradient>
    <linearGradient id="sh" x1="0" x2="1"><stop offset="0" stop-color="#8c98a8"/><stop offset=".55" stop-color="#bcc8d6"/><stop offset="1" stop-color="#8592a2"/></linearGradient>
    <linearGradient id="rim" x1="0" x2="1"><stop offset="0" stop-color="#93a0af"/><stop offset=".3" stop-color="#b3bfcd"/><stop offset=".6" stop-color="#a1aebd"/><stop offset="1" stop-color="#84909f"/></linearGradient>
    <linearGradient id="pin" x1="0" x2="1" y1="0" y2="1"><stop offset="0" stop-color="#8793a2"/><stop offset="1" stop-color="#6f7a87"/></linearGradient>
   </defs>
   <g transform="translate(740 280) scale(.408 .3333)" stroke="#1f2830" stroke-width="3" stroke-linejoin="round">
    <!-- back plate -->
    <path d="M208 975 240 900 232 985z" fill="#bcc8d6" stroke="none"/>
    <path d="M295 677 395 650 305 1200H190L240 900z" fill="#a4b1c3"/>
    <ellipse cx="293" cy="962" rx="40" ry="60" transform="rotate(17 293 962)" fill="#a8b5c7"/>
    <ellipse cx="288" cy="964" rx="32" ry="54" transform="rotate(17 288 964)" fill="#a4b1c3" stroke-width="2"/>
    <!-- lower right housing -->
    <path d="M1010 870 1198 960 1178 1030 1075 1200H700L800 1000z" fill="#727d8a"/>
    <path d="M1005 880 1178 1030" fill="none"/>
    <!-- connector -->
    <path d="M1015 535 1085 520 1105 700 1090 810 1030 790z" fill="#a4b1c3"/>
    <path d="M1030 790 1090 800 1150 910 1198 960 1010 870z" fill="#7f8b99"/>
    <!-- block -->
    <path d="M848 533 968 505 848 1105 725 1130z" fill="#a8b5c7"/>
    <path d="M968 505 1055 575 930 1170 848 1105z" fill="#707b88"/>
    <path d="M725 1130 848 1105 930 1170 800 1200z" fill="#5f6a76"/>
    <path d="M840 700C855 660 895 660 888 700L830 950C815 985 785 985 792 945z" fill="#7a8696"/>
    <ellipse cx="840" cy="808" rx="48" ry="80" transform="rotate(15 840 808)" fill="#98a5b7"/>
    <path d="M810 730 865 732 885 770 872 830 822 872 785 852 775 790z" fill="#7d8998"/>
    <ellipse cx="815" cy="790" rx="38" ry="60" transform="rotate(10 815 790)" fill="#a8b5c7"/>
    <!-- main plate -->
    <path d="M830 470 890 520 848 535z" fill="#8c98a8"/>
    <path d="M405 610Q412 570 455 550L800 462Q830 462 845 525L680 1200H290L300 1120z" fill="#a8b5c7"/>
    <path d="M797 462Q830 458 845 525L688 1200H668L808 530Q812 490 797 475z" fill="#b6c2d0"/>
    <path d="M698 1035 735 1050 730 1072 694 1058z" fill="#c3cedb"/>
    <!-- slot -->
    <path d="M600 570C630 545 655 565 648 610L595 870C585 905 555 935 525 945L540 600z" fill="#a8b5c7"/>
    <path d="M600 600C625 590 637 610 630 640L590 810 560 740z" fill="#8a96a6"/>
    <!-- lower bolt -->
    <path d="M440 930 510 945 550 985Q545 1030 520 1070Q490 1080 470 1060L425 1010z" fill="#8f9cad"/>
    <path d="M432 935 510 950 520 990 470 1000 425 985z" fill="#a4b1c3"/>
    <ellipse cx="462" cy="1015" rx="40" ry="26" transform="rotate(10 462 1015)" fill="#98a5b7"/>
    <ellipse cx="470" cy="1038" rx="32" ry="22" transform="rotate(10 470 1038)" fill="#8b96a5"/>
    <path d="M468 873 525 885 508 975 442 940z" fill="url(#sh)"/>
    <!-- top knob -->
    <path d="M375 190Q380 130 400 110L470 75Q480 50 560 45Q680 50 800 130Q860 170 862 210L850 260Q890 290 885 310L865 375Q830 410 790 415Q720 395 660 370L520 365Q440 300 385 260Q375 230 375 190z" fill="#66717d"/>
    <path d="M375 190Q380 130 400 110L470 75Q480 50 560 45Q680 50 800 130Q860 170 862 210L842 262Q800 220 770 205Q700 190 640 160Q590 125 470 135Q460 180 388 208Q380 200 375 190z" fill="url(#rim)"/>
    <path d="M845 265Q890 290 885 310L865 375Q825 345 822 290Q830 275 845 265z" fill="#96a3b3"/>
    <path d="M470 75 470 135M578 50 566 138M610 60 598 140M750 105 738 190M780 130 768 205M405 115 398 205" fill="none"/>
    <path d="M530 245Q580 215 650 240Q710 265 720 300L705 380H540L520 310z" fill="#a1aebe"/>
    <ellipse cx="615" cy="342" rx="98" ry="55" transform="rotate(20 615 342)" fill="#8c98a8"/>
    <path d="M550 312Q610 290 670 335L660 392 540 380z" fill="url(#sh)"/>
    <ellipse cx="562" cy="338" rx="10" ry="15" fill="#2a3138"/>
    <!-- shaft -->
    <path d="M558 405 632 425 568 770 505 660z" fill="url(#sh)"/>
    <ellipse cx="598" cy="402" rx="66" ry="28" transform="rotate(15 598 402)" fill="#a2afc0"/>
    <ellipse cx="597" cy="396" rx="40" ry="9" transform="rotate(15 597 396)" fill="#6d7886" stroke-width="2"/>
    <path d="M558 398 632 420 625 440 555 420z" fill="url(#sh)" stroke="none"/>
    <!-- nut -->
    <path d="M500 740 598 830Q595 885 555 925L505 880 430 860 505 835Q520 780 500 740z" fill="#77828f"/>
    <path d="M445 750 500 740Q520 780 505 835L430 860Q405 820 415 780z" fill="#a8b5c7"/>
    <!-- right knob -->
    <ellipse cx="1090" cy="770" rx="14" ry="42" fill="#8a96a6"/>
    <ellipse cx="1092" cy="770" rx="7" ry="24" fill="#4a545e"/>
    <path d="M1100 530Q1110 450 1160 425L1230 425 1260 395Q1300 385 1325 380Q1400 420 1425 470Q1450 560 1490 630Q1510 720 1490 820Q1440 880 1420 980Q1350 1000 1290 1020Q1250 1000 1250 975Q1210 930 1155 905Q1120 850 1105 760Q1085 650 1100 530z" fill="url(#kf)"/>
    <path d="M1100 530Q1110 450 1160 425L1195 420Q1150 470 1150 520Q1190 600 1180 660Q1150 720 1150 735Q1170 800 1200 880Q1280 900 1322 990L1290 1020Q1250 1000 1250 975Q1210 930 1155 905Q1120 850 1105 760Q1085 650 1100 530z" fill="#a1aebe"/>
    <path d="M1100 565 1142 520M1105 745 1148 730M1158 905 1200 880M1255 975 1300 960M1250 425Q1280 392 1325 382Q1315 420 1290 430z" fill="none"/>
    <!-- axis -->
    <path d="M378 493 648 910" stroke="#c4313b" stroke-width="3.500" fill="none"/>
    <path d="M513 672 541 703 513 735 487 703z" fill="#fff" stroke="#111" stroke-width="6"/>
    <path d="M513 690 527 703 513 718 499 703z" fill="#e31414" stroke="none"/>
   </g>
   <g transform="translate(710 640) scale(.357 .3333)" stroke="#1f2830" stroke-width="3" stroke-linejoin="round">
    <!-- housing -->
    <path d="M880 0H1395L1245 205 1150 100 920 55z" fill="#727d8a" stroke="none"/>
    <path d="M1395 0 1245 205" fill="none"/>
    <path d="M1345 70 1280 360 1000 190 1245 205z" fill="#6f7a87"/>
    <path d="M1150 226 1232 210 1217 282z" fill="#c1ccd9"/>
    <path d="M1015 125 1125 100 1248 205 1150 226z" fill="#636e7a"/>
    <path d="M1055 20 1053 0H1172L1145 97z" fill="#707b88"/>
    <path d="M915 50 1055 20 1145 97 1012 127z" fill="#5f6a76"/>
    <path d="M922 0H1053L1055 20 915 50z" fill="#a8b5c7"/>
    <!-- plates -->
    <path d="M325 0H435L380 270 300 105z" fill="#a4b1c3" stroke="none"/>
    <path d="M325 0 300 105" fill="none"/>
    <path d="M280 190 395 165 378 267z" fill="#727d8a"/>
    <path d="M435 0H872L830 175 380 270 395 165z" fill="#a8b5c7" stroke="none"/>
    <path d="M435 0 380 270M852 0 828 170" fill="none"/>
    <path d="M875 0H900L862 160H830z" fill="#b6c2d0"/>
    <!-- bracket behind pin -->
    <path d="M640 95Q690 85 702 150V200L640 215z" fill="#8f9cad"/>
    <path d="M550 100Q595 70 630 105L640 225 590 235Q612 170 550 100z" fill="#a8b5c7"/>
    <!-- handle -->
    <path d="M150 115 390 97 385 160 165 208Q125 200 125 155Q130 120 150 115z" fill="url(#sh)"/>
    <path d="M440 40 605 150 590 230 520 240 395 150z" fill="url(#pin)"/>
    <ellipse cx="425" cy="92" rx="42" ry="55" transform="rotate(18 425 92)" fill="#a8b5c7"/>
    <ellipse cx="422" cy="92" rx="34" ry="47" transform="rotate(18 422 92)" fill="#a8b5c7" stroke-width="2"/>
    <ellipse cx="501" cy="113" rx="21" ry="31" fill="#7c8896"/>
    <ellipse cx="498" cy="113" rx="15" ry="25" fill="#6b7683" stroke-width="2"/>
    <!-- base plate -->
    <path d="M1020 185 1515 535 1490 670 995 305z" fill="#737e8b"/>
    <path d="M1495 510Q1520 540 1515 560L1490 670 1470 640 1490 520z" fill="#98a5b6"/>
    <path d="M95 340 915 165 895 282 45 470 65 370Q70 350 95 340z" fill="#a8b5c7"/>
    <path d="M65 370Q70 350 95 340L75 450 45 470z" fill="#bcc8d6"/>
    <path d="M915 165Q925 150 960 150Q1010 160 1020 185L995 305Q950 280 890 282z" fill="url(#sh)"/>
    <path d="M45 470 880 285Q950 275 1000 310L1480 650Q1495 680 1480 695L640 880Q590 890 550 865L50 510Q30 490 45 470z" fill="#5f6a76"/>
    <path d="M180 525 945 352 1180 450 1100 462 1020 450 1012 540 1100 608 1310 618 580 780 335 625 330 640z" fill="#66717d" stroke="none"/>
    <path d="M180 525 945 352 1180 440M1280 520 1345 635 585 808 330 640" fill="none"/>
    <path d="M585 808 1345 635 1310 618 582 778z" fill="#bcc8d6"/>
    <path d="M180 525 230 515 335 625 330 640z" fill="#a5b2c2"/>
    <path d="M510 492 795 430 1030 603 775 655z" fill="#aeb9c8"/>
    <path d="M510 492 680 455 650 590z" fill="#9aa6b6" stroke="none"/>
    <!-- bolt -->
    <path d="M680 455 795 435 762 620 640 600z" fill="url(#sh)" stroke="none"/>
    <path d="M678 470Q735 480 792 450M675 495Q730 505 788 475M670 520Q725 530 783 500M664 545Q720 555 778 525M658 570Q715 580 772 550" fill="none" stroke="#7f8b9a" stroke-width="2"/>
    <ellipse cx="690" cy="670" rx="88" ry="70" transform="rotate(-8 690 670)" fill="#a5b2c3"/>
    <path d="M600 625Q665 565 755 620L745 672Q670 640 600 658Q590 700 622 712Q580 690 600 625z" fill="#21a824" stroke="#159a18"/>
    <path d="M640 665 725 680 710 740 630 725z" fill="url(#sh)"/>
    <ellipse cx="670" cy="732" rx="42" ry="22" transform="rotate(8 670 732)" fill="#8e9aaa"/>
    <!-- left block -->
    <path d="M340 605 425 585 520 650 510 665 410 610z" fill="#b5c1d0"/>
    <path d="M410 610 425 585 515 650 495 745 405 680z" fill="#7a8592"/>
    <path d="M255 655 340 625 410 610 405 680 240 715z" fill="#a8b5c7"/>
    <path d="M240 715 405 680 495 745 335 780z" fill="#5f6a76"/>
    <ellipse cx="365" cy="733" rx="45" ry="24" fill="#3f4851"/><ellipse cx="365" cy="733" rx="24" ry="12" fill="#8c97a4"/>
    <!-- right block -->
    <path d="M1025 450 1100 445 1178 440 1175 452 1030 468z" fill="#d0d9e3"/>
    <path d="M1180 435 1278 495 1255 575 1170 510z" fill="#7a8592"/>
    <path d="M1030 465 1178 450 1170 510 1012 540z" fill="#a8b5c7"/>
    <path d="M1012 540 1170 510 1255 575 1100 608z" fill="#5f6a76"/>
    <ellipse cx="1133" cy="558" rx="45" ry="24" fill="#3f4851"/><ellipse cx="1133" cy="558" rx="24" ry="12" fill="#8c97a4"/>
   </g>
  </svg>
  <!-- gauge at window edge -->
  <div class="absolute right-0 top-[640px] w-[13px] h-[74px] bg-[#55606b] rounded-l-[4px] flex justify-center">
   <svg class="w-[6px] h-[74px]" viewBox="0 0 6 74"><defs><linearGradient id="g1" gradientUnits="userSpaceOnUse" x1="0" y1="6" x2="0" y2="66"><stop offset="0" stop-color="#2d3640"/><stop offset=".38" stop-color="#2d3640"/><stop offset=".45" stop-color="#d8cf5c"/><stop offset=".7" stop-color="#8fc87a"/><stop offset="1" stop-color="#52c0b0"/></linearGradient></defs><path d="M3 6V66" stroke="url(#g1)" stroke-width="6" stroke-dasharray="2 1.200"/></svg>
  </div>
 </div>
</main>

<!-- status bar -->
<footer class="h-[47px] shrink-0 bg-[#f7f9f9] border-t border-[#b5b8b9] flex items-center">
 <div class="w-[26px] h-[25px] ml-[7px] bg-[#dfe2e3] border border-[#b8bcbe] flex items-center justify-center"><svg class="w-[14px] h-[20px]" viewBox="0 0 14 20"><path d="M1 1h4v4H1zM1 8h4v4H1zM1 15h4v4H1zM9 8h4v4H9z" fill="none" stroke="#444"/></svg></div>
 <svg class="w-[21px] h-[22px] ml-[7px]" viewBox="0 0 21 22"><ellipse cx="11" cy="11" rx="8" ry="9" fill="#3f95c9"/><path d="M1 20C3 12 10 4 19 1 16 3 18 6 14 9 10 13 6 17 1 20z" fill="#a7c9dc"/></svg>
 <div class="w-[20px] h-[20px] ml-[9px] border border-[#888e92] bg-gradient-to-b from-[#fafbfb] to-[#c7d7e0]"></div>
 <div class="w-px h-[27px] bg-[#c4c8ca] ml-[13px]"></div>
 <div class="w-[6px] h-[6px] rounded-full bg-[#2d6e93] ml-[7px] mb-[8px]"></div>
 <span class="ml-[5px] text-[13px] mb-[9px] text-[#6b7073]">将不显示注释。</span>
 <div class="flex-1"></div>
 <div class="w-px h-[37px] bg-[#d0d3d5]"></div>
 <svg class="w-[20px] h-[22px] ml-[5px] mr-[48px]" viewBox="0 0 20 22"><path d="M2 11h9v10H2z" fill="#bfe7f5" stroke="#5b9db5"/><path d="M6 8c0-3 2-4 4-4V1l4 3-4 3V5.500c-2 0-3 1-4 2.500z" fill="#123f5e"/><path d="M19 5c0 3-2 5-4 5v3l-4-3 4-3v1.500c2 0 3-1 4-3.500z" fill="#123f5e"/></svg>
 <div class="w-px h-[37px] bg-[#d0d3d5] mr-[3px]"></div>
 <div class="w-[51px] h-[32px] border border-[#c2c6c8] flex items-center mb-[3px]"><svg class="w-[24px] h-[22px] ml-[7px]" viewBox="0 0 24 22"><path d="M4 1h5l2 8v12H1V9zM15 1h5l3 8v12H13V9z" fill="#4c5053"/><path d="M4 1h5l1 6H3zM15 1h5l2 6h-8z" fill="#8a8e90"/><path d="M11 8h2v5h-2z" fill="#33373a"/></svg><div class="w-px h-full bg-[#c8cccd] ml-[4px]"></div><svg class="w-[9px] h-[6px] ml-[4px]"><use href="#dn"/></svg></div>
 <div class="w-px h-[37px] bg-[#d0d3d5] mx-[2px]"></div>
 <div class="w-[49px] h-[35px] border border-[#b6babc] flex items-center justify-center"><svg class="w-[24px] h-[24px]" viewBox="0 0 24 24"><path d="M2 5l4-4h16v16l-4 4H2z" fill="#fff" stroke="#666"/><path d="M6 7h11v11H6z" fill="#f3d58f" stroke="#a88a58"/><path d="M9 5h9v10H9z" fill="#8fd4ef"/></svg></div>
 <span class="w-[119px] pl-[4px] text-[15px] whitespace-nowrap text-[#5d6265]">选择了 1 项</span>
 <div class="w-[217px] h-[29px] mr-[21px] bg-[#fbfcfc] border border-[#a4a9ab] flex items-center mb-[2px]"><span class="flex-1 pl-[8px] text-[15px]">几何</span><div class="w-[19px] h-full border-l border-[#b8bcbe] flex items-center justify-center"><svg class="w-[9px] h-[6px]"><use href="#dn"/></svg></div></div>
</footer>

<!-- taskbar -->
<div class="h-[50px] shrink-0 bg-gradient-to-r from-[#cadde6] to-[#d2e1e8] flex items-stretch">
 <div class="w-[61px] flex items-center justify-center"><svg class="w-[21px] h-[21px]" viewBox="0 0 21 21"><path d="M0 3l9-1.500V10H0zM10 1.300 21 0v10H10zM0 11h9v8.500L0 18zM10 11h11v10l-11-1.500z" fill="#000"/></svg></div>
 <div class="w-[428px] bg-white border border-[#c9cdcf] flex items-center text-[19px] text-[#3c3f41]"><svg class="w-[22px] h-[22px] ml-[13px] mr-[13px]" viewBox="0 0 22 22"><circle cx="13.500" cy="8.500" r="6.500" fill="none" stroke="#222" stroke-width="1.700"/><path d="M9 13 1 21" stroke="#222" stroke-width="1.700"/></svg>在这里输入你要搜索的内容</div>
 <div class="w-[61px] flex items-center justify-center"><div class="w-[19px] h-[19px] rounded-full border-[3px] border-[#111] bg-[#eef2f4]"></div></div>
 <div class="w-[58px] flex items-center justify-center"><svg class="w-[22px] h-[22px]" viewBox="0 0 22 22"><path d="M2 1h12v6H2zM2 7h12v9H2zM2 16h12v5H2zM19 1v5M19 16v5" fill="none" stroke="#111" stroke-width="1.300"/><path d="M18 9h2.500v2.500H18z" fill="#111"/></svg></div>
 <div class="w-[72px] flex items-center justify-center"><svg class="w-[32px] h-[32px]" viewBox="0 0 32 32"><defs><linearGradient id="eg" x1="0" x2="1" y1="1" y2="0"><stop offset="0" stop-color="#0e5da8"/><stop offset=".55" stop-color="#1da3d8"/><stop offset="1" stop-color="#53d27a"/></linearGradient></defs><path d="M16 1c9 0 15 6 15 13 0 5-5 7-9 7-4 0-6-2-5-4 2-2 1-6-4-6S4 15 3 20c1 7 9 12 17 10-8 4-19-1-19-14C1 7 8 1 16 1z" fill="url(#eg)"/></svg></div>
 <div class="w-[58px] pr-[6px] flex items-center justify-center"><svg class="w-[29px] h-[25px]" viewBox="0 0 29 25"><path d="M1 1h11l3 3h13v20H1z" fill="#f4d671"/><path d="M1 1h11l3 3H1z" fill="#d9a42a"/><path d="M5 13h19v11h-6v-5h-7v5H5z" fill="#2f88c4"/></svg></div>
 <div class="w-[61px] bg-[#eaf2f5] border-b-[3px] border-[#c8933d] flex items-center justify-center"><svg class="w-[28px] h-[28px]" viewBox="0 0 28 28"><path d="M1 6l4-2h13v23H3a2 2 0 0 1-2-2z" fill="#f8e9c8" stroke="#a98e5e"/><path d="M7 2h19v18H7z" fill="#a5dff6"/><path d="M24 2h3v22l-3 3z" fill="#5b9db5"/><path d="M7 20h20v7H7z" fill="#f0ddb0"/></svg></div>
 <div class="flex-1 flex items-center justify-end">
  <svg class="w-[16px] h-[10px] mr-[15px]" viewBox="0 0 16 10"><path d="M1 9l7-7 7 7" fill="none" stroke="#111" stroke-width="1.300"/></svg>
  <svg class="w-[18px] h-[18px] mr-[10px]" viewBox="0 0 18 18"><path d="M1 13C3 6 8 3 15 2M5 14c1-4 4-6 9-7M9 15c.5-2 2-3 5-4" fill="none" stroke="#222"/><circle cx="14" cy="15" r="1.500" fill="#111"/></svg>
  <svg class="w-[20px] h-[12px] mr-[8px]" viewBox="0 0 20 12"><path d="M5 2h14v8H5z" fill="#111"/><path d="M0 3h4v4H0z" fill="#333"/></svg>
  <svg class="w-[20px] h-[17px] mr-[11px]" viewBox="0 0 20 17"><path d="M1 5h4l4-4v15l-4-4H1z" fill="none" stroke="#111"/><path d="M12 5c2 2 2 5 0 7M15 3c3 3 3 8 0 11" fill="none" stroke="#222"/></svg>
  <span class="text-[18px] text-[#4a4d4f] mr-[19px]">中</span>
  <svg class="w-[19px] h-[20px] mr-[17px]" viewBox="0 0 19 20"><rect x="1" y="1" width="17" height="18" rx="4" fill="#e8542a"/><path d="M14 5H7C4 5 4 9 7 9h5c3 0 3 6-1 6H5" fill="none" stroke="#fff" stroke-width="2.500"/></svg>
  <div class="w-[88px] text-center text-[16.500px] leading-[23px] text-[#37393a] mr-[17px]"><div>7:14</div><div>2020/7/5</div></div>
  <div class="w-[34px] relative self-center h-[38px] mr-[16px]"><svg class="absolute left-0 top-[4px] w-[22px] h-[21px]" viewBox="0 0 22 21"><path d="M1 1h20v15H9l-4 4v-4H1z" fill="#000"/><path d="M5 5h12M5 8h12M5 11h12" stroke="#fff"/></svg><div class="absolute right-[2px] bottom-[0px] w-[21px] h-[21px] rounded-full border-2 border-[#6c7173] bg-[#cfd9de] text-[14px] font-bold leading-[18px] text-center text-[#222]">1</div></div>
 </div>
</div>
</body></html>
